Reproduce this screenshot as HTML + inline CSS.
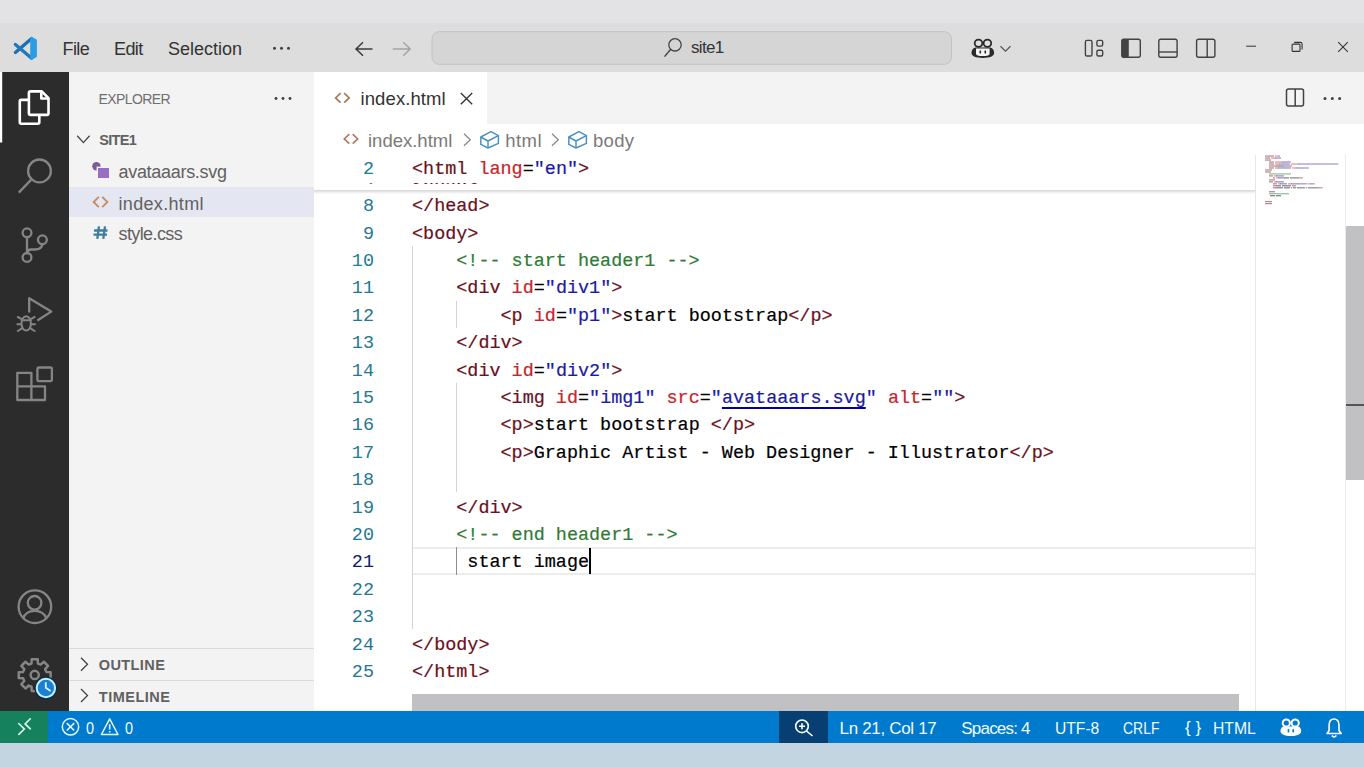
<!DOCTYPE html>
<html><head><meta charset="utf-8">
<style>
*{margin:0;padding:0;box-sizing:border-box}
html,body{width:1364px;height:767px;overflow:hidden;background:#fff;font-family:"Liberation Sans",sans-serif}
.a{position:absolute}
#top{left:0;top:0;width:1364px;height:22.5px;background:#e3e3e5}
#title{left:0;top:23px;width:1364px;height:49px;background:#dddddd}
#act{left:0;top:72px;width:69px;height:639px;background:#2c2c2c}
#side{left:69px;top:72px;width:245px;height:639px;background:#f3f3f3}
#tabs{left:314px;top:72px;width:1050px;height:52px;background:#f3f3f3}
#tab1{left:314px;top:72px;width:173px;height:52px;background:#ffffff}
#editor{left:314px;top:124px;width:1050px;height:587px;background:#ffffff}
#status{left:0;top:711px;width:1364px;height:32px;background:#007acc}
#remote{left:0;top:711px;width:48px;height:32px;background:#16825d}
#bottom{left:0;top:743px;width:1364px;height:24px;background:#c3d5e1}
.t{position:absolute;white-space:pre;line-height:1}
.menu{color:#333;font-size:18px}
.side{color:#616161;font-size:18px}
.ln{position:absolute;width:60px;text-align:right;left:314px;color:#237893;font-family:"Liberation Mono",monospace;font-size:18.45px;line-height:1;white-space:pre}
.ln.act{color:#0b216f}
.code{position:absolute;left:412px;font-family:"Liberation Mono",monospace;font-size:18.45px;-webkit-text-stroke:0.2px currentColor;line-height:1;white-space:pre;color:#000}
.tg{color:#6a1020}.at{color:#c8242a}.vl{color:#1a1aa8}.cm{color:#2f7a35}
u{text-decoration:underline;text-decoration-skip-ink:none;text-decoration-color:#0000a0;text-underline-offset:4px;text-decoration-thickness:1.5px}
.sb{color:#f0fbff;font-size:17px}
</style></head><body>
<div id="top" class="a"></div>
<div id="title" class="a"></div>
<div id="act" class="a"></div>
<div id="side" class="a"></div>
<div id="tabs" class="a"></div>
<div id="tab1" class="a"></div>
<div id="editor" class="a"></div>
<div id="status" class="a"></div>
<div id="remote" class="a"></div>
<div id="bottom" class="a"></div>
<div id="zoombg" class="a" style="left:779px;top:711px;width:49px;height:32px;background:#083f72"></div>

<!-- current line -->
<div class="a" style="left:412px;top:547px;width:843px;height:28px;border-top:2px solid #ececec;border-bottom:2px solid #ececec"></div>
<!-- selected explorer row -->
<div class="a" style="left:69px;top:186.5px;width:245px;height:30.5px;background:#e4e6f1"></div>
<!-- sidebar section borders -->
<div class="a" style="left:69px;top:648px;width:245px;height:1px;background:#d9d9d9"></div>
<div class="a" style="left:69px;top:680px;width:245px;height:1px;background:#d9d9d9"></div>
<!-- minimap/scrollbars -->
<div class="a" style="left:1255px;top:155px;width:1px;height:556px;background:#e6e6e6"></div>
<div class="a" style="left:1345px;top:155px;width:1px;height:556px;background:#ececec"></div>
<div class="a" style="left:1346px;top:226px;width:18px;height:254px;background:#c1c1c3"></div>
<div class="a" style="left:1346px;top:404px;width:18px;height:2px;background:#555"></div>
<div class="a" style="left:412px;top:694px;width:827px;height:17px;background:#c1c1c3"></div>
<!-- sticky scroll shadow -->
<div class="a" style="left:314px;top:190px;width:941px;height:4px;background:linear-gradient(#d6d6d6,rgba(255,255,255,0))"></div>

<div class="a" style="left:412px;top:245.8px;width:1px;height:383.6px;background:#d3d3d3"></div>
<div class="a" style="left:456px;top:300.6px;width:1px;height:27.4px;background:#d3d3d3"></div>
<div class="a" style="left:456px;top:382.8px;width:1px;height:109.6px;background:#d3d3d3"></div>
<div class="a" style="left:456px;top:547.2px;width:1px;height:27.4px;background:#8f8f8f"></div>

<div class="ln" style="top:198.1px">8</div>
<div class="code" style="top:198.1px"><span class="tg">&lt;/head</span><span class="tg">&gt;</span></div>
<div class="ln" style="top:225.5px">9</div>
<div class="code" style="top:225.5px"><span class="tg">&lt;body</span><span class="tg">&gt;</span></div>
<div class="ln" style="top:252.9px">10</div>
<div class="code" style="top:252.9px">    <span class="cm">&lt;!-- start header1 --&gt;</span></div>
<div class="ln" style="top:280.3px">11</div>
<div class="code" style="top:280.3px">    <span class="tg">&lt;div</span> <span class="at">id</span>=<span class="vl">"div1"</span><span class="tg">&gt;</span></div>
<div class="ln" style="top:307.7px">12</div>
<div class="code" style="top:307.7px">        <span class="tg">&lt;p</span> <span class="at">id</span>=<span class="vl">"p1"</span><span class="tg">&gt;</span>start bootstrap<span class="tg">&lt;/p</span><span class="tg">&gt;</span></div>
<div class="ln" style="top:335.1px">13</div>
<div class="code" style="top:335.1px">    <span class="tg">&lt;/div</span><span class="tg">&gt;</span></div>
<div class="ln" style="top:362.5px">14</div>
<div class="code" style="top:362.5px">    <span class="tg">&lt;div</span> <span class="at">id</span>=<span class="vl">"div2"</span><span class="tg">&gt;</span></div>
<div class="ln" style="top:389.9px">15</div>
<div class="code" style="top:389.9px">        <span class="tg">&lt;img</span> <span class="at">id</span>=<span class="vl">"img1"</span> <span class="at">src</span>=<span class="vl">"<u>avataaars.svg</u>"</span> <span class="at">alt</span>=<span class="vl">""</span><span class="tg">&gt;</span></div>
<div class="ln" style="top:417.3px">16</div>
<div class="code" style="top:417.3px">        <span class="tg">&lt;p</span><span class="tg">&gt;</span>start bootstrap <span class="tg">&lt;/p</span><span class="tg">&gt;</span></div>
<div class="ln" style="top:444.7px">17</div>
<div class="code" style="top:444.7px">        <span class="tg">&lt;p</span><span class="tg">&gt;</span>Graphic Artist - Web Designer - Illustrator<span class="tg">&lt;/p</span><span class="tg">&gt;</span></div>
<div class="ln" style="top:472.1px">18</div>
<div class="ln" style="top:499.5px">19</div>
<div class="code" style="top:499.5px">    <span class="tg">&lt;/div</span><span class="tg">&gt;</span></div>
<div class="ln" style="top:526.9px">20</div>
<div class="code" style="top:526.9px">    <span class="cm">&lt;!-- end header1 --&gt;</span></div>
<div class="ln act" style="top:554.3px">21</div>
<div class="code" style="top:554.3px">     start image</div>
<div class="ln" style="top:581.7px">22</div>
<div class="ln" style="top:609.1px">23</div>
<div class="ln" style="top:636.5px">24</div>
<div class="code" style="top:636.5px"><span class="tg">&lt;/body</span><span class="tg">&gt;</span></div>
<div class="ln" style="top:663.9px">25</div>
<div class="code" style="top:663.9px"><span class="tg">&lt;/html</span><span class="tg">&gt;</span></div>

<div class="ln" style="top:161px">2</div>
<div class="code" style="top:161px"><span class="tg">&lt;html</span> <span class="at">lang</span>=<span class="vl">"en"</span><span class="tg">&gt;</span></div>
<div class="a" style="left:314px;top:182.5px;width:941px;height:1.8px;overflow:hidden"><div class="ln" style="left:0;top:-4.5px">3</div><div class="code" style="left:98px;top:-4.5px"><span class="tg">&lt;head&gt;</span></div></div>
<!-- cursor -->
<div class="a" style="left:589px;top:548px;width:2px;height:26px;background:#000"></div>

<svg class="a" style="left:0;top:0" width="1364" height="767"><g opacity="0.6"><rect x="1265.20" y="155.50" width="0.85" height="1.2" fill="#6a1020"/><rect x="1266.19" y="155.50" width="0.85" height="1.2" fill="#6a1020"/><rect x="1267.18" y="155.50" width="0.85" height="1.2" fill="#6a1020"/><rect x="1268.17" y="155.50" width="0.85" height="1.2" fill="#6a1020"/><rect x="1269.16" y="155.50" width="0.85" height="1.2" fill="#6a1020"/><rect x="1270.15" y="155.50" width="0.85" height="1.2" fill="#6a1020"/><rect x="1271.14" y="155.50" width="0.85" height="1.2" fill="#6a1020"/><rect x="1272.13" y="155.50" width="0.85" height="1.2" fill="#6a1020"/><rect x="1273.12" y="155.50" width="0.85" height="1.2" fill="#6a1020"/><rect x="1275.10" y="155.50" width="0.85" height="1.2" fill="#c8242a"/><rect x="1276.09" y="155.50" width="0.85" height="1.2" fill="#c8242a"/><rect x="1277.08" y="155.50" width="0.85" height="1.2" fill="#c8242a"/><rect x="1278.07" y="155.50" width="0.85" height="1.2" fill="#c8242a"/><rect x="1279.06" y="155.50" width="0.85" height="1.2" fill="#6a1020"/><rect x="1265.20" y="157.48" width="0.85" height="1.2" fill="#6a1020"/><rect x="1266.19" y="157.48" width="0.85" height="1.2" fill="#6a1020"/><rect x="1267.18" y="157.48" width="0.85" height="1.2" fill="#6a1020"/><rect x="1268.17" y="157.48" width="0.85" height="1.2" fill="#6a1020"/><rect x="1269.16" y="157.48" width="0.85" height="1.2" fill="#6a1020"/><rect x="1271.14" y="157.48" width="0.85" height="1.2" fill="#c8242a"/><rect x="1272.13" y="157.48" width="0.85" height="1.2" fill="#c8242a"/><rect x="1273.12" y="157.48" width="0.85" height="1.2" fill="#c8242a"/><rect x="1274.11" y="157.48" width="0.85" height="1.2" fill="#c8242a"/><rect x="1275.10" y="157.48" width="0.85" height="1.2" fill="#000000"/><rect x="1276.09" y="157.48" width="0.85" height="1.2" fill="#1a1aa8"/><rect x="1277.08" y="157.48" width="0.85" height="1.2" fill="#1a1aa8"/><rect x="1278.07" y="157.48" width="0.85" height="1.2" fill="#1a1aa8"/><rect x="1279.06" y="157.48" width="0.85" height="1.2" fill="#1a1aa8"/><rect x="1280.05" y="157.48" width="0.85" height="1.2" fill="#6a1020"/><rect x="1265.20" y="159.46" width="0.85" height="1.2" fill="#6a1020"/><rect x="1266.19" y="159.46" width="0.85" height="1.2" fill="#6a1020"/><rect x="1267.18" y="159.46" width="0.85" height="1.2" fill="#6a1020"/><rect x="1268.17" y="159.46" width="0.85" height="1.2" fill="#6a1020"/><rect x="1269.16" y="159.46" width="0.85" height="1.2" fill="#6a1020"/><rect x="1270.15" y="159.46" width="0.85" height="1.2" fill="#6a1020"/><rect x="1269.16" y="161.44" width="0.85" height="1.2" fill="#6a1020"/><rect x="1270.15" y="161.44" width="0.85" height="1.2" fill="#6a1020"/><rect x="1271.14" y="161.44" width="0.85" height="1.2" fill="#6a1020"/><rect x="1272.13" y="161.44" width="0.85" height="1.2" fill="#6a1020"/><rect x="1273.12" y="161.44" width="0.85" height="1.2" fill="#6a1020"/><rect x="1275.10" y="161.44" width="0.85" height="1.2" fill="#c8242a"/><rect x="1276.09" y="161.44" width="0.85" height="1.2" fill="#c8242a"/><rect x="1277.08" y="161.44" width="0.85" height="1.2" fill="#c8242a"/><rect x="1278.07" y="161.44" width="0.85" height="1.2" fill="#c8242a"/><rect x="1279.06" y="161.44" width="0.85" height="1.2" fill="#c8242a"/><rect x="1280.05" y="161.44" width="0.85" height="1.2" fill="#c8242a"/><rect x="1281.04" y="161.44" width="0.85" height="1.2" fill="#c8242a"/><rect x="1282.03" y="161.44" width="0.85" height="1.2" fill="#000000"/><rect x="1283.02" y="161.44" width="0.85" height="1.2" fill="#1a1aa8"/><rect x="1284.01" y="161.44" width="0.85" height="1.2" fill="#1a1aa8"/><rect x="1285.00" y="161.44" width="0.85" height="1.2" fill="#1a1aa8"/><rect x="1285.99" y="161.44" width="0.85" height="1.2" fill="#1a1aa8"/><rect x="1286.98" y="161.44" width="0.85" height="1.2" fill="#1a1aa8"/><rect x="1287.97" y="161.44" width="0.85" height="1.2" fill="#1a1aa8"/><rect x="1288.96" y="161.44" width="0.85" height="1.2" fill="#1a1aa8"/><rect x="1289.95" y="161.44" width="0.85" height="1.2" fill="#6a1020"/><rect x="1269.16" y="163.42" width="0.85" height="1.2" fill="#6a1020"/><rect x="1270.15" y="163.42" width="0.85" height="1.2" fill="#6a1020"/><rect x="1271.14" y="163.42" width="0.85" height="1.2" fill="#6a1020"/><rect x="1272.13" y="163.42" width="0.85" height="1.2" fill="#6a1020"/><rect x="1273.12" y="163.42" width="0.85" height="1.2" fill="#6a1020"/><rect x="1275.10" y="163.42" width="0.85" height="1.2" fill="#c8242a"/><rect x="1276.09" y="163.42" width="0.85" height="1.2" fill="#c8242a"/><rect x="1277.08" y="163.42" width="0.85" height="1.2" fill="#c8242a"/><rect x="1278.07" y="163.42" width="0.85" height="1.2" fill="#c8242a"/><rect x="1279.06" y="163.42" width="0.85" height="1.2" fill="#000000"/><rect x="1280.05" y="163.42" width="0.85" height="1.2" fill="#1a1aa8"/><rect x="1281.04" y="163.42" width="0.85" height="1.2" fill="#1a1aa8"/><rect x="1282.03" y="163.42" width="0.85" height="1.2" fill="#1a1aa8"/><rect x="1283.02" y="163.42" width="0.85" height="1.2" fill="#1a1aa8"/><rect x="1284.01" y="163.42" width="0.85" height="1.2" fill="#1a1aa8"/><rect x="1285.00" y="163.42" width="0.85" height="1.2" fill="#1a1aa8"/><rect x="1285.99" y="163.42" width="0.85" height="1.2" fill="#1a1aa8"/><rect x="1286.98" y="163.42" width="0.85" height="1.2" fill="#1a1aa8"/><rect x="1287.97" y="163.42" width="0.85" height="1.2" fill="#1a1aa8"/><rect x="1288.96" y="163.42" width="0.85" height="1.2" fill="#1a1aa8"/><rect x="1290.94" y="163.42" width="0.85" height="1.2" fill="#c8242a"/><rect x="1291.93" y="163.42" width="0.85" height="1.2" fill="#c8242a"/><rect x="1292.92" y="163.42" width="0.85" height="1.2" fill="#c8242a"/><rect x="1293.91" y="163.42" width="0.85" height="1.2" fill="#c8242a"/><rect x="1294.90" y="163.42" width="0.85" height="1.2" fill="#c8242a"/><rect x="1295.89" y="163.42" width="0.85" height="1.2" fill="#c8242a"/><rect x="1296.88" y="163.42" width="0.85" height="1.2" fill="#c8242a"/><rect x="1297.87" y="163.42" width="0.85" height="1.2" fill="#000000"/><rect x="1298.86" y="163.42" width="0.85" height="1.2" fill="#1a1aa8"/><rect x="1299.85" y="163.42" width="0.85" height="1.2" fill="#1a1aa8"/><rect x="1300.84" y="163.42" width="0.85" height="1.2" fill="#1a1aa8"/><rect x="1301.83" y="163.42" width="0.85" height="1.2" fill="#1a1aa8"/><rect x="1302.82" y="163.42" width="0.85" height="1.2" fill="#1a1aa8"/><rect x="1303.81" y="163.42" width="0.85" height="1.2" fill="#1a1aa8"/><rect x="1304.80" y="163.42" width="0.85" height="1.2" fill="#1a1aa8"/><rect x="1305.79" y="163.42" width="0.85" height="1.2" fill="#1a1aa8"/><rect x="1306.78" y="163.42" width="0.85" height="1.2" fill="#1a1aa8"/><rect x="1307.77" y="163.42" width="0.85" height="1.2" fill="#1a1aa8"/><rect x="1308.76" y="163.42" width="0.85" height="1.2" fill="#1a1aa8"/><rect x="1309.75" y="163.42" width="0.85" height="1.2" fill="#1a1aa8"/><rect x="1310.74" y="163.42" width="0.85" height="1.2" fill="#1a1aa8"/><rect x="1311.73" y="163.42" width="0.85" height="1.2" fill="#1a1aa8"/><rect x="1312.72" y="163.42" width="0.85" height="1.2" fill="#1a1aa8"/><rect x="1313.71" y="163.42" width="0.85" height="1.2" fill="#1a1aa8"/><rect x="1314.70" y="163.42" width="0.85" height="1.2" fill="#1a1aa8"/><rect x="1315.69" y="163.42" width="0.85" height="1.2" fill="#1a1aa8"/><rect x="1316.68" y="163.42" width="0.85" height="1.2" fill="#1a1aa8"/><rect x="1317.67" y="163.42" width="0.85" height="1.2" fill="#1a1aa8"/><rect x="1318.66" y="163.42" width="0.85" height="1.2" fill="#1a1aa8"/><rect x="1319.65" y="163.42" width="0.85" height="1.2" fill="#1a1aa8"/><rect x="1320.64" y="163.42" width="0.85" height="1.2" fill="#1a1aa8"/><rect x="1321.63" y="163.42" width="0.85" height="1.2" fill="#1a1aa8"/><rect x="1322.62" y="163.42" width="0.85" height="1.2" fill="#1a1aa8"/><rect x="1323.61" y="163.42" width="0.85" height="1.2" fill="#1a1aa8"/><rect x="1324.60" y="163.42" width="0.85" height="1.2" fill="#1a1aa8"/><rect x="1325.59" y="163.42" width="0.85" height="1.2" fill="#1a1aa8"/><rect x="1326.58" y="163.42" width="0.85" height="1.2" fill="#1a1aa8"/><rect x="1327.57" y="163.42" width="0.85" height="1.2" fill="#1a1aa8"/><rect x="1328.56" y="163.42" width="0.85" height="1.2" fill="#1a1aa8"/><rect x="1329.55" y="163.42" width="0.85" height="1.2" fill="#1a1aa8"/><rect x="1330.54" y="163.42" width="0.85" height="1.2" fill="#1a1aa8"/><rect x="1331.53" y="163.42" width="0.85" height="1.2" fill="#1a1aa8"/><rect x="1332.52" y="163.42" width="0.85" height="1.2" fill="#1a1aa8"/><rect x="1333.51" y="163.42" width="0.85" height="1.2" fill="#1a1aa8"/><rect x="1334.50" y="163.42" width="0.85" height="1.2" fill="#1a1aa8"/><rect x="1335.49" y="163.42" width="0.85" height="1.2" fill="#1a1aa8"/><rect x="1336.48" y="163.42" width="0.85" height="1.2" fill="#1a1aa8"/><rect x="1337.47" y="163.42" width="0.85" height="1.2" fill="#6a1020"/><rect x="1269.16" y="165.40" width="0.85" height="1.2" fill="#6a1020"/><rect x="1270.15" y="165.40" width="0.85" height="1.2" fill="#6a1020"/><rect x="1271.14" y="165.40" width="0.85" height="1.2" fill="#6a1020"/><rect x="1272.13" y="165.40" width="0.85" height="1.2" fill="#6a1020"/><rect x="1273.12" y="165.40" width="0.85" height="1.2" fill="#6a1020"/><rect x="1274.11" y="165.40" width="0.85" height="1.2" fill="#6a1020"/><rect x="1275.10" y="165.40" width="0.85" height="1.2" fill="#6a1020"/><rect x="1276.09" y="165.40" width="0.85" height="1.2" fill="#000000"/><rect x="1277.08" y="165.40" width="0.85" height="1.2" fill="#000000"/><rect x="1278.07" y="165.40" width="0.85" height="1.2" fill="#000000"/><rect x="1279.06" y="165.40" width="0.85" height="1.2" fill="#000000"/><rect x="1280.05" y="165.40" width="0.85" height="1.2" fill="#000000"/><rect x="1281.04" y="165.40" width="0.85" height="1.2" fill="#000000"/><rect x="1282.03" y="165.40" width="0.85" height="1.2" fill="#000000"/><rect x="1283.02" y="165.40" width="0.85" height="1.2" fill="#000000"/><rect x="1284.01" y="165.40" width="0.85" height="1.2" fill="#6a1020"/><rect x="1285.00" y="165.40" width="0.85" height="1.2" fill="#6a1020"/><rect x="1285.99" y="165.40" width="0.85" height="1.2" fill="#6a1020"/><rect x="1286.98" y="165.40" width="0.85" height="1.2" fill="#6a1020"/><rect x="1287.97" y="165.40" width="0.85" height="1.2" fill="#6a1020"/><rect x="1288.96" y="165.40" width="0.85" height="1.2" fill="#6a1020"/><rect x="1289.95" y="165.40" width="0.85" height="1.2" fill="#6a1020"/><rect x="1290.94" y="165.40" width="0.85" height="1.2" fill="#6a1020"/><rect x="1269.16" y="167.38" width="0.85" height="1.2" fill="#6a1020"/><rect x="1270.15" y="167.38" width="0.85" height="1.2" fill="#6a1020"/><rect x="1271.14" y="167.38" width="0.85" height="1.2" fill="#6a1020"/><rect x="1272.13" y="167.38" width="0.85" height="1.2" fill="#6a1020"/><rect x="1273.12" y="167.38" width="0.85" height="1.2" fill="#6a1020"/><rect x="1275.10" y="167.38" width="0.85" height="1.2" fill="#c8242a"/><rect x="1276.09" y="167.38" width="0.85" height="1.2" fill="#c8242a"/><rect x="1277.08" y="167.38" width="0.85" height="1.2" fill="#c8242a"/><rect x="1278.07" y="167.38" width="0.85" height="1.2" fill="#000000"/><rect x="1279.06" y="167.38" width="0.85" height="1.2" fill="#1a1aa8"/><rect x="1280.05" y="167.38" width="0.85" height="1.2" fill="#1a1aa8"/><rect x="1281.04" y="167.38" width="0.85" height="1.2" fill="#1a1aa8"/><rect x="1282.03" y="167.38" width="0.85" height="1.2" fill="#1a1aa8"/><rect x="1283.02" y="167.38" width="0.85" height="1.2" fill="#1a1aa8"/><rect x="1284.01" y="167.38" width="0.85" height="1.2" fill="#1a1aa8"/><rect x="1285.00" y="167.38" width="0.85" height="1.2" fill="#1a1aa8"/><rect x="1285.99" y="167.38" width="0.85" height="1.2" fill="#1a1aa8"/><rect x="1286.98" y="167.38" width="0.85" height="1.2" fill="#1a1aa8"/><rect x="1287.97" y="167.38" width="0.85" height="1.2" fill="#1a1aa8"/><rect x="1288.96" y="167.38" width="0.85" height="1.2" fill="#1a1aa8"/><rect x="1289.95" y="167.38" width="0.85" height="1.2" fill="#1a1aa8"/><rect x="1291.93" y="167.38" width="0.85" height="1.2" fill="#c8242a"/><rect x="1292.92" y="167.38" width="0.85" height="1.2" fill="#c8242a"/><rect x="1293.91" y="167.38" width="0.85" height="1.2" fill="#c8242a"/><rect x="1294.90" y="167.38" width="0.85" height="1.2" fill="#c8242a"/><rect x="1295.89" y="167.38" width="0.85" height="1.2" fill="#000000"/><rect x="1296.88" y="167.38" width="0.85" height="1.2" fill="#1a1aa8"/><rect x="1297.87" y="167.38" width="0.85" height="1.2" fill="#1a1aa8"/><rect x="1298.86" y="167.38" width="0.85" height="1.2" fill="#1a1aa8"/><rect x="1299.85" y="167.38" width="0.85" height="1.2" fill="#1a1aa8"/><rect x="1300.84" y="167.38" width="0.85" height="1.2" fill="#1a1aa8"/><rect x="1301.83" y="167.38" width="0.85" height="1.2" fill="#1a1aa8"/><rect x="1302.82" y="167.38" width="0.85" height="1.2" fill="#1a1aa8"/><rect x="1303.81" y="167.38" width="0.85" height="1.2" fill="#1a1aa8"/><rect x="1304.80" y="167.38" width="0.85" height="1.2" fill="#1a1aa8"/><rect x="1305.79" y="167.38" width="0.85" height="1.2" fill="#1a1aa8"/><rect x="1306.78" y="167.38" width="0.85" height="1.2" fill="#1a1aa8"/><rect x="1307.77" y="167.38" width="0.85" height="1.2" fill="#6a1020"/><rect x="1265.20" y="169.36" width="0.85" height="1.2" fill="#6a1020"/><rect x="1266.19" y="169.36" width="0.85" height="1.2" fill="#6a1020"/><rect x="1267.18" y="169.36" width="0.85" height="1.2" fill="#6a1020"/><rect x="1268.17" y="169.36" width="0.85" height="1.2" fill="#6a1020"/><rect x="1269.16" y="169.36" width="0.85" height="1.2" fill="#6a1020"/><rect x="1270.15" y="169.36" width="0.85" height="1.2" fill="#6a1020"/><rect x="1271.14" y="169.36" width="0.85" height="1.2" fill="#6a1020"/><rect x="1265.20" y="171.34" width="0.85" height="1.2" fill="#6a1020"/><rect x="1266.19" y="171.34" width="0.85" height="1.2" fill="#6a1020"/><rect x="1267.18" y="171.34" width="0.85" height="1.2" fill="#6a1020"/><rect x="1268.17" y="171.34" width="0.85" height="1.2" fill="#6a1020"/><rect x="1269.16" y="171.34" width="0.85" height="1.2" fill="#6a1020"/><rect x="1270.15" y="171.34" width="0.85" height="1.2" fill="#6a1020"/><rect x="1269.16" y="173.32" width="0.85" height="1.2" fill="#2f7a35"/><rect x="1270.15" y="173.32" width="0.85" height="1.2" fill="#2f7a35"/><rect x="1271.14" y="173.32" width="0.85" height="1.2" fill="#2f7a35"/><rect x="1272.13" y="173.32" width="0.85" height="1.2" fill="#2f7a35"/><rect x="1273.12" y="173.32" width="0.85" height="1.2" fill="#2f7a35"/><rect x="1274.11" y="173.32" width="0.85" height="1.2" fill="#2f7a35"/><rect x="1275.10" y="173.32" width="0.85" height="1.2" fill="#2f7a35"/><rect x="1276.09" y="173.32" width="0.85" height="1.2" fill="#2f7a35"/><rect x="1277.08" y="173.32" width="0.85" height="1.2" fill="#2f7a35"/><rect x="1278.07" y="173.32" width="0.85" height="1.2" fill="#2f7a35"/><rect x="1279.06" y="173.32" width="0.85" height="1.2" fill="#2f7a35"/><rect x="1280.05" y="173.32" width="0.85" height="1.2" fill="#2f7a35"/><rect x="1281.04" y="173.32" width="0.85" height="1.2" fill="#2f7a35"/><rect x="1282.03" y="173.32" width="0.85" height="1.2" fill="#2f7a35"/><rect x="1283.02" y="173.32" width="0.85" height="1.2" fill="#2f7a35"/><rect x="1284.01" y="173.32" width="0.85" height="1.2" fill="#2f7a35"/><rect x="1285.00" y="173.32" width="0.85" height="1.2" fill="#2f7a35"/><rect x="1285.99" y="173.32" width="0.85" height="1.2" fill="#2f7a35"/><rect x="1286.98" y="173.32" width="0.85" height="1.2" fill="#2f7a35"/><rect x="1287.97" y="173.32" width="0.85" height="1.2" fill="#2f7a35"/><rect x="1288.96" y="173.32" width="0.85" height="1.2" fill="#2f7a35"/><rect x="1289.95" y="173.32" width="0.85" height="1.2" fill="#2f7a35"/><rect x="1269.16" y="175.30" width="0.85" height="1.2" fill="#6a1020"/><rect x="1270.15" y="175.30" width="0.85" height="1.2" fill="#6a1020"/><rect x="1271.14" y="175.30" width="0.85" height="1.2" fill="#6a1020"/><rect x="1272.13" y="175.30" width="0.85" height="1.2" fill="#6a1020"/><rect x="1274.11" y="175.30" width="0.85" height="1.2" fill="#c8242a"/><rect x="1275.10" y="175.30" width="0.85" height="1.2" fill="#c8242a"/><rect x="1276.09" y="175.30" width="0.85" height="1.2" fill="#000000"/><rect x="1277.08" y="175.30" width="0.85" height="1.2" fill="#1a1aa8"/><rect x="1278.07" y="175.30" width="0.85" height="1.2" fill="#1a1aa8"/><rect x="1279.06" y="175.30" width="0.85" height="1.2" fill="#1a1aa8"/><rect x="1280.05" y="175.30" width="0.85" height="1.2" fill="#1a1aa8"/><rect x="1281.04" y="175.30" width="0.85" height="1.2" fill="#1a1aa8"/><rect x="1282.03" y="175.30" width="0.85" height="1.2" fill="#1a1aa8"/><rect x="1283.02" y="175.30" width="0.85" height="1.2" fill="#6a1020"/><rect x="1273.12" y="177.28" width="0.85" height="1.2" fill="#6a1020"/><rect x="1274.11" y="177.28" width="0.85" height="1.2" fill="#6a1020"/><rect x="1276.09" y="177.28" width="0.85" height="1.2" fill="#c8242a"/><rect x="1277.08" y="177.28" width="0.85" height="1.2" fill="#c8242a"/><rect x="1278.07" y="177.28" width="0.85" height="1.2" fill="#000000"/><rect x="1279.06" y="177.28" width="0.85" height="1.2" fill="#1a1aa8"/><rect x="1280.05" y="177.28" width="0.85" height="1.2" fill="#1a1aa8"/><rect x="1281.04" y="177.28" width="0.85" height="1.2" fill="#1a1aa8"/><rect x="1282.03" y="177.28" width="0.85" height="1.2" fill="#1a1aa8"/><rect x="1283.02" y="177.28" width="0.85" height="1.2" fill="#6a1020"/><rect x="1284.01" y="177.28" width="0.85" height="1.2" fill="#000000"/><rect x="1285.00" y="177.28" width="0.85" height="1.2" fill="#000000"/><rect x="1285.99" y="177.28" width="0.85" height="1.2" fill="#000000"/><rect x="1286.98" y="177.28" width="0.85" height="1.2" fill="#000000"/><rect x="1287.97" y="177.28" width="0.85" height="1.2" fill="#000000"/><rect x="1289.95" y="177.28" width="0.85" height="1.2" fill="#000000"/><rect x="1290.94" y="177.28" width="0.85" height="1.2" fill="#000000"/><rect x="1291.93" y="177.28" width="0.85" height="1.2" fill="#000000"/><rect x="1292.92" y="177.28" width="0.85" height="1.2" fill="#000000"/><rect x="1293.91" y="177.28" width="0.85" height="1.2" fill="#000000"/><rect x="1294.90" y="177.28" width="0.85" height="1.2" fill="#000000"/><rect x="1295.89" y="177.28" width="0.85" height="1.2" fill="#000000"/><rect x="1296.88" y="177.28" width="0.85" height="1.2" fill="#000000"/><rect x="1297.87" y="177.28" width="0.85" height="1.2" fill="#000000"/><rect x="1298.86" y="177.28" width="0.85" height="1.2" fill="#6a1020"/><rect x="1299.85" y="177.28" width="0.85" height="1.2" fill="#6a1020"/><rect x="1300.84" y="177.28" width="0.85" height="1.2" fill="#6a1020"/><rect x="1301.83" y="177.28" width="0.85" height="1.2" fill="#6a1020"/><rect x="1269.16" y="179.26" width="0.85" height="1.2" fill="#6a1020"/><rect x="1270.15" y="179.26" width="0.85" height="1.2" fill="#6a1020"/><rect x="1271.14" y="179.26" width="0.85" height="1.2" fill="#6a1020"/><rect x="1272.13" y="179.26" width="0.85" height="1.2" fill="#6a1020"/><rect x="1273.12" y="179.26" width="0.85" height="1.2" fill="#6a1020"/><rect x="1274.11" y="179.26" width="0.85" height="1.2" fill="#6a1020"/><rect x="1269.16" y="181.24" width="0.85" height="1.2" fill="#6a1020"/><rect x="1270.15" y="181.24" width="0.85" height="1.2" fill="#6a1020"/><rect x="1271.14" y="181.24" width="0.85" height="1.2" fill="#6a1020"/><rect x="1272.13" y="181.24" width="0.85" height="1.2" fill="#6a1020"/><rect x="1274.11" y="181.24" width="0.85" height="1.2" fill="#c8242a"/><rect x="1275.10" y="181.24" width="0.85" height="1.2" fill="#c8242a"/><rect x="1276.09" y="181.24" width="0.85" height="1.2" fill="#000000"/><rect x="1277.08" y="181.24" width="0.85" height="1.2" fill="#1a1aa8"/><rect x="1278.07" y="181.24" width="0.85" height="1.2" fill="#1a1aa8"/><rect x="1279.06" y="181.24" width="0.85" height="1.2" fill="#1a1aa8"/><rect x="1280.05" y="181.24" width="0.85" height="1.2" fill="#1a1aa8"/><rect x="1281.04" y="181.24" width="0.85" height="1.2" fill="#1a1aa8"/><rect x="1282.03" y="181.24" width="0.85" height="1.2" fill="#1a1aa8"/><rect x="1283.02" y="181.24" width="0.85" height="1.2" fill="#6a1020"/><rect x="1273.12" y="183.22" width="0.85" height="1.2" fill="#6a1020"/><rect x="1274.11" y="183.22" width="0.85" height="1.2" fill="#6a1020"/><rect x="1275.10" y="183.22" width="0.85" height="1.2" fill="#6a1020"/><rect x="1276.09" y="183.22" width="0.85" height="1.2" fill="#6a1020"/><rect x="1278.07" y="183.22" width="0.85" height="1.2" fill="#c8242a"/><rect x="1279.06" y="183.22" width="0.85" height="1.2" fill="#c8242a"/><rect x="1280.05" y="183.22" width="0.85" height="1.2" fill="#000000"/><rect x="1281.04" y="183.22" width="0.85" height="1.2" fill="#1a1aa8"/><rect x="1282.03" y="183.22" width="0.85" height="1.2" fill="#1a1aa8"/><rect x="1283.02" y="183.22" width="0.85" height="1.2" fill="#1a1aa8"/><rect x="1284.01" y="183.22" width="0.85" height="1.2" fill="#1a1aa8"/><rect x="1285.00" y="183.22" width="0.85" height="1.2" fill="#1a1aa8"/><rect x="1285.99" y="183.22" width="0.85" height="1.2" fill="#1a1aa8"/><rect x="1287.97" y="183.22" width="0.85" height="1.2" fill="#c8242a"/><rect x="1288.96" y="183.22" width="0.85" height="1.2" fill="#c8242a"/><rect x="1289.95" y="183.22" width="0.85" height="1.2" fill="#c8242a"/><rect x="1290.94" y="183.22" width="0.85" height="1.2" fill="#000000"/><rect x="1291.93" y="183.22" width="0.85" height="1.2" fill="#1a1aa8"/><rect x="1292.92" y="183.22" width="0.85" height="1.2" fill="#1a1aa8"/><rect x="1293.91" y="183.22" width="0.85" height="1.2" fill="#1a1aa8"/><rect x="1294.90" y="183.22" width="0.85" height="1.2" fill="#1a1aa8"/><rect x="1295.89" y="183.22" width="0.85" height="1.2" fill="#1a1aa8"/><rect x="1296.88" y="183.22" width="0.85" height="1.2" fill="#1a1aa8"/><rect x="1297.87" y="183.22" width="0.85" height="1.2" fill="#1a1aa8"/><rect x="1298.86" y="183.22" width="0.85" height="1.2" fill="#1a1aa8"/><rect x="1299.85" y="183.22" width="0.85" height="1.2" fill="#1a1aa8"/><rect x="1300.84" y="183.22" width="0.85" height="1.2" fill="#1a1aa8"/><rect x="1301.83" y="183.22" width="0.85" height="1.2" fill="#1a1aa8"/><rect x="1302.82" y="183.22" width="0.85" height="1.2" fill="#1a1aa8"/><rect x="1303.81" y="183.22" width="0.85" height="1.2" fill="#1a1aa8"/><rect x="1304.80" y="183.22" width="0.85" height="1.2" fill="#1a1aa8"/><rect x="1305.79" y="183.22" width="0.85" height="1.2" fill="#1a1aa8"/><rect x="1307.77" y="183.22" width="0.85" height="1.2" fill="#c8242a"/><rect x="1308.76" y="183.22" width="0.85" height="1.2" fill="#c8242a"/><rect x="1309.75" y="183.22" width="0.85" height="1.2" fill="#c8242a"/><rect x="1310.74" y="183.22" width="0.85" height="1.2" fill="#000000"/><rect x="1311.73" y="183.22" width="0.85" height="1.2" fill="#1a1aa8"/><rect x="1312.72" y="183.22" width="0.85" height="1.2" fill="#1a1aa8"/><rect x="1313.71" y="183.22" width="0.85" height="1.2" fill="#6a1020"/><rect x="1273.12" y="185.20" width="0.85" height="1.2" fill="#6a1020"/><rect x="1274.11" y="185.20" width="0.85" height="1.2" fill="#6a1020"/><rect x="1275.10" y="185.20" width="0.85" height="1.2" fill="#6a1020"/><rect x="1276.09" y="185.20" width="0.85" height="1.2" fill="#000000"/><rect x="1277.08" y="185.20" width="0.85" height="1.2" fill="#000000"/><rect x="1278.07" y="185.20" width="0.85" height="1.2" fill="#000000"/><rect x="1279.06" y="185.20" width="0.85" height="1.2" fill="#000000"/><rect x="1280.05" y="185.20" width="0.85" height="1.2" fill="#000000"/><rect x="1282.03" y="185.20" width="0.85" height="1.2" fill="#000000"/><rect x="1283.02" y="185.20" width="0.85" height="1.2" fill="#000000"/><rect x="1284.01" y="185.20" width="0.85" height="1.2" fill="#000000"/><rect x="1285.00" y="185.20" width="0.85" height="1.2" fill="#000000"/><rect x="1285.99" y="185.20" width="0.85" height="1.2" fill="#000000"/><rect x="1286.98" y="185.20" width="0.85" height="1.2" fill="#000000"/><rect x="1287.97" y="185.20" width="0.85" height="1.2" fill="#000000"/><rect x="1288.96" y="185.20" width="0.85" height="1.2" fill="#000000"/><rect x="1289.95" y="185.20" width="0.85" height="1.2" fill="#000000"/><rect x="1291.93" y="185.20" width="0.85" height="1.2" fill="#6a1020"/><rect x="1292.92" y="185.20" width="0.85" height="1.2" fill="#6a1020"/><rect x="1293.91" y="185.20" width="0.85" height="1.2" fill="#6a1020"/><rect x="1294.90" y="185.20" width="0.85" height="1.2" fill="#6a1020"/><rect x="1273.12" y="187.18" width="0.85" height="1.2" fill="#6a1020"/><rect x="1274.11" y="187.18" width="0.85" height="1.2" fill="#6a1020"/><rect x="1275.10" y="187.18" width="0.85" height="1.2" fill="#6a1020"/><rect x="1276.09" y="187.18" width="0.85" height="1.2" fill="#000000"/><rect x="1277.08" y="187.18" width="0.85" height="1.2" fill="#000000"/><rect x="1278.07" y="187.18" width="0.85" height="1.2" fill="#000000"/><rect x="1279.06" y="187.18" width="0.85" height="1.2" fill="#000000"/><rect x="1280.05" y="187.18" width="0.85" height="1.2" fill="#000000"/><rect x="1281.04" y="187.18" width="0.85" height="1.2" fill="#000000"/><rect x="1282.03" y="187.18" width="0.85" height="1.2" fill="#000000"/><rect x="1284.01" y="187.18" width="0.85" height="1.2" fill="#000000"/><rect x="1285.00" y="187.18" width="0.85" height="1.2" fill="#000000"/><rect x="1285.99" y="187.18" width="0.85" height="1.2" fill="#000000"/><rect x="1286.98" y="187.18" width="0.85" height="1.2" fill="#000000"/><rect x="1287.97" y="187.18" width="0.85" height="1.2" fill="#000000"/><rect x="1288.96" y="187.18" width="0.85" height="1.2" fill="#000000"/><rect x="1290.94" y="187.18" width="0.85" height="1.2" fill="#000000"/><rect x="1292.92" y="187.18" width="0.85" height="1.2" fill="#000000"/><rect x="1293.91" y="187.18" width="0.85" height="1.2" fill="#000000"/><rect x="1294.90" y="187.18" width="0.85" height="1.2" fill="#000000"/><rect x="1296.88" y="187.18" width="0.85" height="1.2" fill="#000000"/><rect x="1297.87" y="187.18" width="0.85" height="1.2" fill="#000000"/><rect x="1298.86" y="187.18" width="0.85" height="1.2" fill="#000000"/><rect x="1299.85" y="187.18" width="0.85" height="1.2" fill="#000000"/><rect x="1300.84" y="187.18" width="0.85" height="1.2" fill="#000000"/><rect x="1301.83" y="187.18" width="0.85" height="1.2" fill="#000000"/><rect x="1302.82" y="187.18" width="0.85" height="1.2" fill="#000000"/><rect x="1303.81" y="187.18" width="0.85" height="1.2" fill="#000000"/><rect x="1305.79" y="187.18" width="0.85" height="1.2" fill="#000000"/><rect x="1307.77" y="187.18" width="0.85" height="1.2" fill="#000000"/><rect x="1308.76" y="187.18" width="0.85" height="1.2" fill="#000000"/><rect x="1309.75" y="187.18" width="0.85" height="1.2" fill="#000000"/><rect x="1310.74" y="187.18" width="0.85" height="1.2" fill="#000000"/><rect x="1311.73" y="187.18" width="0.85" height="1.2" fill="#000000"/><rect x="1312.72" y="187.18" width="0.85" height="1.2" fill="#000000"/><rect x="1313.71" y="187.18" width="0.85" height="1.2" fill="#000000"/><rect x="1314.70" y="187.18" width="0.85" height="1.2" fill="#000000"/><rect x="1315.69" y="187.18" width="0.85" height="1.2" fill="#000000"/><rect x="1316.68" y="187.18" width="0.85" height="1.2" fill="#000000"/><rect x="1317.67" y="187.18" width="0.85" height="1.2" fill="#000000"/><rect x="1318.66" y="187.18" width="0.85" height="1.2" fill="#6a1020"/><rect x="1319.65" y="187.18" width="0.85" height="1.2" fill="#6a1020"/><rect x="1320.64" y="187.18" width="0.85" height="1.2" fill="#6a1020"/><rect x="1321.63" y="187.18" width="0.85" height="1.2" fill="#6a1020"/><rect x="1269.16" y="191.14" width="0.85" height="1.2" fill="#6a1020"/><rect x="1270.15" y="191.14" width="0.85" height="1.2" fill="#6a1020"/><rect x="1271.14" y="191.14" width="0.85" height="1.2" fill="#6a1020"/><rect x="1272.13" y="191.14" width="0.85" height="1.2" fill="#6a1020"/><rect x="1273.12" y="191.14" width="0.85" height="1.2" fill="#6a1020"/><rect x="1274.11" y="191.14" width="0.85" height="1.2" fill="#6a1020"/><rect x="1269.16" y="193.12" width="0.85" height="1.2" fill="#2f7a35"/><rect x="1270.15" y="193.12" width="0.85" height="1.2" fill="#2f7a35"/><rect x="1271.14" y="193.12" width="0.85" height="1.2" fill="#2f7a35"/><rect x="1272.13" y="193.12" width="0.85" height="1.2" fill="#2f7a35"/><rect x="1273.12" y="193.12" width="0.85" height="1.2" fill="#2f7a35"/><rect x="1274.11" y="193.12" width="0.85" height="1.2" fill="#2f7a35"/><rect x="1275.10" y="193.12" width="0.85" height="1.2" fill="#2f7a35"/><rect x="1276.09" y="193.12" width="0.85" height="1.2" fill="#2f7a35"/><rect x="1277.08" y="193.12" width="0.85" height="1.2" fill="#2f7a35"/><rect x="1278.07" y="193.12" width="0.85" height="1.2" fill="#2f7a35"/><rect x="1279.06" y="193.12" width="0.85" height="1.2" fill="#2f7a35"/><rect x="1280.05" y="193.12" width="0.85" height="1.2" fill="#2f7a35"/><rect x="1281.04" y="193.12" width="0.85" height="1.2" fill="#2f7a35"/><rect x="1282.03" y="193.12" width="0.85" height="1.2" fill="#2f7a35"/><rect x="1283.02" y="193.12" width="0.85" height="1.2" fill="#2f7a35"/><rect x="1284.01" y="193.12" width="0.85" height="1.2" fill="#2f7a35"/><rect x="1285.00" y="193.12" width="0.85" height="1.2" fill="#2f7a35"/><rect x="1285.99" y="193.12" width="0.85" height="1.2" fill="#2f7a35"/><rect x="1286.98" y="193.12" width="0.85" height="1.2" fill="#2f7a35"/><rect x="1287.97" y="193.12" width="0.85" height="1.2" fill="#2f7a35"/><rect x="1270.15" y="195.10" width="0.85" height="1.2" fill="#000000"/><rect x="1271.14" y="195.10" width="0.85" height="1.2" fill="#000000"/><rect x="1272.13" y="195.10" width="0.85" height="1.2" fill="#000000"/><rect x="1273.12" y="195.10" width="0.85" height="1.2" fill="#000000"/><rect x="1274.11" y="195.10" width="0.85" height="1.2" fill="#000000"/><rect x="1276.09" y="195.10" width="0.85" height="1.2" fill="#000000"/><rect x="1277.08" y="195.10" width="0.85" height="1.2" fill="#000000"/><rect x="1278.07" y="195.10" width="0.85" height="1.2" fill="#000000"/><rect x="1279.06" y="195.10" width="0.85" height="1.2" fill="#000000"/><rect x="1280.05" y="195.10" width="0.85" height="1.2" fill="#000000"/><rect x="1265.20" y="201.04" width="0.85" height="1.2" fill="#6a1020"/><rect x="1266.19" y="201.04" width="0.85" height="1.2" fill="#6a1020"/><rect x="1267.18" y="201.04" width="0.85" height="1.2" fill="#6a1020"/><rect x="1268.17" y="201.04" width="0.85" height="1.2" fill="#6a1020"/><rect x="1269.16" y="201.04" width="0.85" height="1.2" fill="#6a1020"/><rect x="1270.15" y="201.04" width="0.85" height="1.2" fill="#6a1020"/><rect x="1271.14" y="201.04" width="0.85" height="1.2" fill="#6a1020"/><rect x="1265.20" y="203.02" width="0.85" height="1.2" fill="#6a1020"/><rect x="1266.19" y="203.02" width="0.85" height="1.2" fill="#6a1020"/><rect x="1267.18" y="203.02" width="0.85" height="1.2" fill="#6a1020"/><rect x="1268.17" y="203.02" width="0.85" height="1.2" fill="#6a1020"/><rect x="1269.16" y="203.02" width="0.85" height="1.2" fill="#6a1020"/><rect x="1270.15" y="203.02" width="0.85" height="1.2" fill="#6a1020"/><rect x="1271.14" y="203.02" width="0.85" height="1.2" fill="#6a1020"/></g></svg>
<svg class="a" style="left:0;top:0" width="1364" height="767" viewBox="0 0 1364 767">
<!-- VS Code logo -->
<g stroke-linecap="round">
<path d="M31.6 38.6L15.4 52.4" stroke="#1c70b2" stroke-width="3.3"/>
<path d="M31.6 58.2L15.4 44.4" stroke="#1f78bd" stroke-width="3.3"/>
</g>
<path d="M30.2 37.8Q30.9 36.7 32.1 37.2L36 39.1Q36.9 39.6 36.9 40.6V56.2Q36.9 57.2 36 57.6L32.1 59.5Q30.9 60 30.2 59Z" fill="#2c9de2"/>
<!-- menu dots -->
<g fill="#424242"><circle cx="274.5" cy="48.3" r="1.5"/><circle cx="281.5" cy="48.3" r="1.5"/><circle cx="288.5" cy="48.3" r="1.5"/></g>
<!-- back/forward -->
<path d="M372.5 49H356.5M363 42.2L356 49L363 55.8" stroke="#3b3b3b" stroke-width="1.5" fill="none"/>
<path d="M392.8 49H409.3M403.3 42.2L410.2 49L403.3 55.8" stroke="#a3a3a3" stroke-width="1.4" fill="none"/>
<!-- command center -->
<rect x="432" y="31.7" width="519.5" height="32.6" rx="7" fill="#d5d5d5" stroke="#c2c2c2" stroke-width="1"/>
<circle cx="675" cy="44.8" r="6.2" stroke="#424242" stroke-width="1.3" fill="none"/>
<path d="M670.7 49.3L664.5 56.6" stroke="#424242" stroke-width="1.4"/>
<!-- copilot -->
<path fill="#2a2a2a" d="M971.5 53C971.5 49.6 973.6 47.5 976.2 47.5H989.4C992 47.5 994.1 49.6 994.1 53C994.1 56.2 989.6 57.9 982.8 57.9C976 57.9 971.5 56.2 971.5 53Z"/>
<path fill="#f4f4f4" d="M976 48.6H989.6V53.4C989.6 55.4 987 56.1 982.8 56.1C978.6 56.1 976 55.4 976 53.4Z"/>
<ellipse cx="980.3" cy="52" rx="0.9" ry="1.8" fill="#2a2a2a"/><ellipse cx="985.3" cy="52" rx="0.9" ry="1.8" fill="#2a2a2a"/>
<ellipse cx="978.5" cy="43.2" rx="3.8" ry="3.6" fill="#dfe3df" stroke="#2a2a2a" stroke-width="1.8"/>
<ellipse cx="987.4" cy="43.2" rx="3.8" ry="3.6" fill="#dfe3df" stroke="#2a2a2a" stroke-width="1.8"/>
<path d="M1000.5 46.3L1005.5 51.2L1010.5 46.3" stroke="#555" stroke-width="1.2" fill="none"/>
<!-- layout icons -->
<g stroke="#424242" stroke-width="1.4" fill="none">
<rect x="1085.4" y="40.4" width="6.6" height="15.6" rx="1.6"/>
<rect x="1096.9" y="40.4" width="5.8" height="5.7" rx="1.5"/>
<rect x="1096.9" y="50.3" width="5.8" height="5.7" rx="1.5"/>
<rect x="1121.8" y="39.3" width="18.5" height="18" rx="2"/>
<rect x="1158.8" y="39.3" width="18.3" height="18" rx="2"/>
<path d="M1158.8 52H1177.1"/>
<rect x="1196.6" y="39.3" width="18.3" height="18" rx="2"/>
<path d="M1207.2 39.3V57.3"/>
</g>
<rect x="1121.8" y="39.3" width="7" height="18" rx="1" fill="#424242"/>
<!-- window controls -->
<path d="M1246.2 46.2H1256" stroke="#333" stroke-width="1"/>
<rect x="1292.1" y="44.1" width="7.9" height="7.3" rx="1" stroke="#333" stroke-width="1.1" fill="none"/>
<path d="M1294.2 42.4H1300.2Q1302.1 42.4 1302.1 44.3V49.5" stroke="#333" stroke-width="1.1" fill="none"/>
<path d="M1338.2 42.1L1347.8 51.9M1347.8 42.1L1338.2 51.9" stroke="#333" stroke-width="1.05"/>

<!-- activity bar -->
<rect x="0" y="72" width="2.2" height="70.5" fill="#ffffff"/>
<g stroke="#ffffff" stroke-width="2.6" fill="none" stroke-linejoin="round">
<path d="M28.9 93Q28.9 91.4 30.5 91.4H41.8L48.5 98.1V113.3Q48.5 114.9 46.9 114.9H30.5Q28.9 114.9 28.9 113.3Z"/>
<path d="M41.3 91.6V98.5H48.3"/>
<path d="M28.9 99.9H21.2Q19.8 99.9 19.8 101.3V122.3Q19.8 123.7 21.2 123.7H37.9Q39.3 123.7 39.3 122.3V114.9"/>
</g>
<g stroke="#858585" stroke-width="2.3" fill="none" stroke-linejoin="round">
<circle cx="39.5" cy="170.9" r="11.4"/>
<path d="M31.2 179.6L18.8 192.6"/>
<circle cx="27" cy="232.8" r="4.4"/>
<circle cx="27" cy="257.4" r="4.4"/>
<circle cx="42.4" cy="239.8" r="4.4"/>
<path d="M27 237.2V253"/>
<path d="M42.4 244.2Q41.5 249.5 35 249.5H31Q27.5 249.5 27 253"/>
<path d="M29.2 312.6V298.2L51.2 311.6L37.4 320.5" stroke-linejoin="round"/>
<path d="M17.3 372.8H31.4V386.3H45V400H17.3Z"/>
<path d="M17.3 386.3H31.4V400"/>
<rect x="37.4" y="367.5" width="14.5" height="13.6" rx="1.5"/>
<circle cx="34.9" cy="606.7" r="16.3"/>
<circle cx="34.6" cy="602.8" r="6.8"/>
<path d="M23.2 618.5Q25.5 610.8 34.7 610.8Q43.9 610.8 46.3 618.5"/>
<path d="M31.49 663.54 L31.75 659.17 L37.65 659.17 L37.91 663.54 L40.61 664.66 L43.88 661.75 L48.05 665.92 L45.14 669.19 L46.26 671.89 L50.63 672.15 L50.63 678.05 L46.26 678.31 L45.14 681.01 L48.05 684.28 L43.88 688.45 L40.61 685.54 L37.91 686.66 L37.65 691.03 L31.75 691.03 L31.49 686.66 L28.79 685.54 L25.52 688.45 L21.35 684.28 L24.26 681.01 L23.14 678.31 L18.77 678.05 L18.77 672.15 L23.14 671.89 L24.26 669.19 L21.35 665.92 L25.52 661.75 L28.79 664.66 Z" stroke-width="2.5"/>
<circle cx="34.7" cy="674.9" r="4.1" stroke-width="2.4"/>
</g>
<!-- bug -->
<g stroke="#858585" stroke-width="2" fill="none" stroke-linecap="round">
<ellipse cx="26.2" cy="323.4" rx="4.7" ry="7.2"/>
<path d="M21.6 320.2H30.8"/>
<path d="M21.2 318.8L17.8 317M21 324.2H17.4M21.5 328.6L17.8 331M31.2 318.8L34.6 317M31.4 324.2H35M30.9 328.6L34.6 331"/>
</g>
<!-- badge -->
<circle cx="45.9" cy="688" r="11.5" fill="#0d2c48"/>
<circle cx="45.9" cy="688" r="9.2" fill="#1b80d4" stroke="#c4f2ff" stroke-width="2"/>
<path d="M45.8 682.3V687.8L50.6 691" stroke="#d8f6ff" stroke-width="1.8" fill="none"/>
</svg>
<svg class="a" style="left:0;top:0" width="1364" height="767" viewBox="0 0 1364 767">
<!-- explorer dots -->
<g fill="#424242"><circle cx="276" cy="98.5" r="1.45"/><circle cx="283" cy="98.5" r="1.45"/><circle cx="290" cy="98.5" r="1.45"/></g>
<!-- SITE1 chevron -->
<path d="M77.2 135.8L83.4 142.6L89.6 135.8" stroke="#424242" stroke-width="1.3" fill="none"/>
<!-- outline/timeline chevrons -->
<path d="M81 657.8L87.5 664.3L81 670.8" stroke="#424242" stroke-width="1.3" fill="none"/>
<path d="M81 689L87.5 695.5L81 702" stroke="#424242" stroke-width="1.3" fill="none"/>
<!-- svg file icon -->
<circle cx="96.4" cy="166.2" r="4.2" fill="#7a5c99"/>
<rect x="96.6" y="166.6" width="13.7" height="12.6" fill="#f3f3f3"/>
<rect x="98" y="168" width="11" height="10" fill="#9a6dc5"/>
<!-- html file icon sidebar -->
<path d="M98.8 196.8L93.6 202L98.8 207.2M102.2 196.8L107.4 202L102.2 207.2" stroke="#c88a5e" stroke-width="1.8" fill="none"/>
<!-- css # -->
<g stroke="#3d7f9f" stroke-width="2.3" fill="none">
<path d="M99 226.3L97.3 238.8M105 226.3L103.3 238.8M94 230.5H107.5M93.5 234.7H107"/>
</g>
<!-- tab html icon -->
<path d="M340.6 93.1L335.6 97.9L340.6 102.7M344.2 93.1L349.2 97.9L344.2 102.7" stroke="#a27b5f" stroke-width="1.7" fill="none"/>
<!-- tab close -->
<path d="M460.8 93L472.2 104.2M472.2 93L460.8 104.2" stroke="#333" stroke-width="1.35"/>
<!-- breadcrumb html icon -->
<path d="M349.3 134.1L344.3 138.9L349.3 143.7M352.7 134.1L357.7 138.9L352.7 143.7" stroke="#b27a6a" stroke-width="1.7" fill="none"/>
<!-- breadcrumb chevrons -->
<path d="M464 133.8L470.3 139.8L464 145.8" stroke="#8a8a8a" stroke-width="1.3" fill="none"/>
<path d="M552 133.8L558.3 139.8L552 145.8" stroke="#8a8a8a" stroke-width="1.3" fill="none"/>
<!-- cubes -->
<g stroke="#4a8fc4" stroke-width="1.45" fill="none" stroke-linejoin="round">
<path d="M480.8 137L491 131.6L498.4 135.6V143.4L488 148L480.8 144.4Z"/>
<path d="M480.8 137L488 141L498.4 135.6M488 141V148"/>
<path d="M568.8 137L579 131.6L586.4 135.6V143.4L576 148L568.8 144.4Z"/>
<path d="M568.8 137L576 141L586.4 135.6M576 141V148"/>
</g>
<!-- editor actions -->
<rect x="1286.5" y="89" width="17" height="17" rx="2" stroke="#424242" stroke-width="1.5" fill="none"/>
<path d="M1295.2 89V106" stroke="#424242" stroke-width="1.5"/>
<g fill="#424242"><circle cx="1325" cy="98.5" r="1.5"/><circle cx="1332.3" cy="98.5" r="1.5"/><circle cx="1339.6" cy="98.5" r="1.5"/></g>
<!-- status bar icons -->
<path d="M18.8 723.7L24.3 729L18.8 734.3M30.3 718.8L25.1 723.9L30.3 728.8" stroke="#d8ffee" stroke-width="1.6" fill="none" stroke-linecap="round"/>
<circle cx="70.5" cy="726.8" r="8.2" stroke="#e6f7ff" stroke-width="1.5" fill="none"/>
<path d="M66.8 723.1L74.2 730.5M74.2 723.1L66.8 730.5" stroke="#e6f7ff" stroke-width="1.5"/>
<path d="M109.7 718.8L118 734.5H101.4Z" stroke="#e6f7ff" stroke-width="1.5" fill="none" stroke-linejoin="round"/>
<path d="M109.7 724.2V729.5M109.7 731V732.5" stroke="#e6f7ff" stroke-width="1.6"/>
<!-- zoom icon -->
<circle cx="802" cy="726.3" r="6.3" stroke="#fff" stroke-width="1.6" fill="none"/>
<path d="M806.5 731L812.5 736M799 726.3H805M802 723.3V729.3" stroke="#fff" stroke-width="1.6"/>
<!-- copilot status -->
<path fill="#fff" d="M1280.5 731C1280.5 728.3 1282 726.5 1284 726.5H1297.6C1299.6 726.5 1301.2 728.3 1301.2 731C1301.2 734.2 1297 736 1290.8 736C1284.6 736 1280.5 734.2 1280.5 731Z"/>
<ellipse cx="1286.3" cy="723" rx="3.6" ry="3.6" fill="#007acc" stroke="#fff" stroke-width="2"/>
<ellipse cx="1295.2" cy="723" rx="3.6" ry="3.6" fill="#007acc" stroke="#fff" stroke-width="2"/>
<rect x="1287.6" y="729" width="1.7" height="3.5" rx="0.8" fill="#007acc"/>
<rect x="1292.4" y="729" width="1.7" height="3.5" rx="0.8" fill="#007acc"/>
<!-- bell -->
<path d="M1327 733.5H1341.2L1339 730.5V725.5Q1339 719 1334 719Q1329.1 719 1329.1 725.5V730.5Z" stroke="#fff" stroke-width="1.6" fill="none" stroke-linejoin="round"/>
<path d="M1331.8 735.6Q1334.1 738.3 1336.4 735.6" stroke="#fff" stroke-width="1.6" fill="none"/>
</svg>


<!-- title bar text -->
<div class="t menu" style="left:62.5px;top:40px;letter-spacing:-0.6px">File</div>
<div class="t menu" style="left:114px;top:40px;letter-spacing:-0.6px">Edit</div>
<div class="t menu" style="left:168px;top:40px">Selection</div>
<div class="t menu" style="left:691px;top:39px;font-size:17px;letter-spacing:-0.7px">site1</div>

<!-- sidebar text -->
<div class="t side" style="left:98.5px;top:92px;font-size:14px;color:#6f6f6f;letter-spacing:-0.6px">EXPLORER</div>
<div class="t side" style="left:99.3px;top:133px;font-size:14.5px;font-weight:bold;letter-spacing:-0.7px">SITE1</div>
<div class="t side" style="left:118.5px;top:162.5px;letter-spacing:-0.3px">avataaars.svg</div>
<div class="t side" style="left:118.5px;top:194.5px;letter-spacing:0.33px">index.html</div>
<div class="t side" style="left:118.5px;top:225px;letter-spacing:-0.6px">style.css</div>
<div class="t side" style="left:98.8px;top:657.5px;font-size:14.5px;font-weight:bold;letter-spacing:0.4px">OUTLINE</div>
<div class="t side" style="left:98.8px;top:689.5px;font-size:14.5px;font-weight:bold;letter-spacing:0.5px">TIMELINE</div>

<!-- tab + breadcrumbs -->
<div class="t menu" style="left:360.5px;top:89.5px;font-size:18.5px;letter-spacing:0.1px">index.html</div>
<div class="t menu" style="left:368px;top:131.5px;font-size:18.5px;color:#7a7a7a">index.html</div>
<div class="t menu" style="left:505.2px;top:131.5px;font-size:18.5px;color:#7a7a7a;letter-spacing:0.5px">html</div>
<div class="t menu" style="left:593px;top:131.5px;font-size:18.5px;color:#7a7a7a;letter-spacing:0.3px">body</div>

<!-- status bar -->
<div class="t sb" style="left:85.5px;top:720.3px;transform:scaleX(0.85);transform-origin:0 0">0</div>
<div class="t sb" style="left:125px;top:720.3px;transform:scaleX(0.85);transform-origin:0 0">0</div>
<div class="t sb" style="left:839.5px;top:719.5px;letter-spacing:-0.32px">Ln 21, Col 17</div>
<div class="t sb" style="left:961.3px;top:719.5px;letter-spacing:-0.8px">Spaces: 4</div>
<div class="t sb" style="left:1054.5px;top:719.5px;transform:scaleX(0.92);transform-origin:0 0">UTF-8</div>
<div class="t sb" style="left:1123px;top:719.5px;transform:scaleX(0.82);transform-origin:0 0">CRLF</div>
<div class="t sb" style="left:1185px;top:719px">{ }</div>
<div class="t sb" style="left:1212.8px;top:719.5px;transform:scaleX(0.925);transform-origin:0 0">HTML</div>
</body></html>
